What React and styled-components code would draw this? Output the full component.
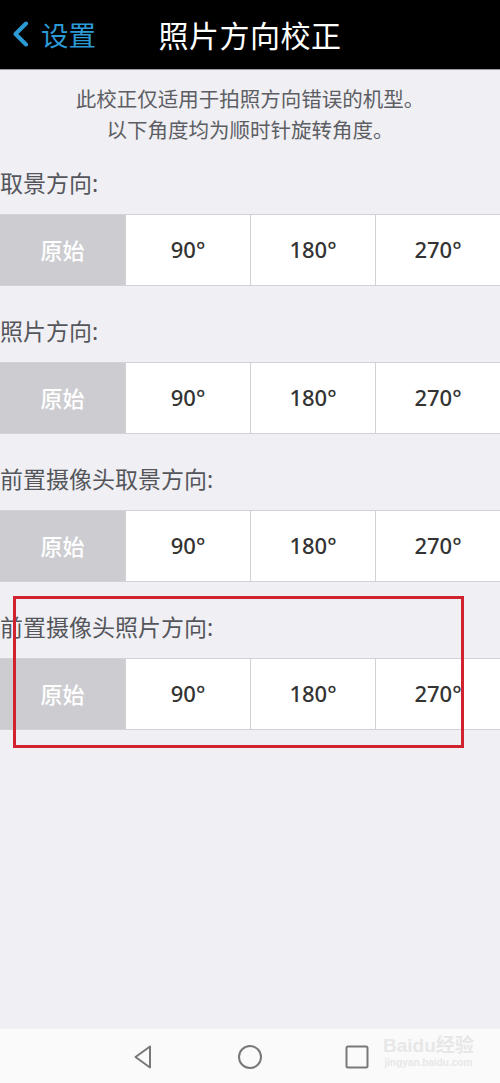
import React from "react";
import styled, { createGlobalStyle } from "styled-components";

const GlobalStyle = createGlobalStyle`
  html, body {
    margin: 0;
    padding: 0;
    background: #efeff4;
  }
  * { box-sizing: border-box; }
`;

const Page = styled.div`
  width: 500px;
  height: 1083px;
  display: flex;
  flex-direction: column;
  background: #efeff4;
  font-family: "Noto Sans", "Noto Sans CJK SC", sans-serif;
  overflow: hidden;
`;

const Header = styled.div`
  height: 70px;
  flex-shrink: 0;
  background: #000;
  border-bottom: 1px solid #9a9a9e;
  position: relative;
  display: flex;
  align-items: center;
  justify-content: center;
`;

const BackButton = styled.div`
  position: absolute;
  left: 11px;
  top: 0;
  bottom: 0;
  display: flex;
  align-items: center;
  gap: 12px;
  color: #2b9ad6;
  font-size: 27.5px;
  padding-bottom: 2px;
`;

const Title = styled.div`
  color: #fff;
  font-size: 30px;
  letter-spacing: 0.5px;
  padding-bottom: 2px;
`;

const Body = styled.div`
  flex: 1;
  position: relative;
`;

const Notes = styled.div`
  padding-top: 14px;
  text-align: center;
  font-size: 20.5px;
  line-height: 31px;
  color: #5d5e63;
`;

const Section = styled.div`
  padding-top: ${(p) => (p.$first ? 23 : 31)}px;
`;

const Label = styled.div`
  font-size: 23px;
  line-height: 28px;
  color: #55565b;
  padding-bottom: 17px;
`;

const Segments = styled.div`
  display: grid;
  grid-template-columns: repeat(4, 1fr);
  height: 72px;
  border-top: 1px solid #d2d2d6;
  border-bottom: 1px solid #d2d2d6;
  background: #fff;
`;

const Cell = styled.div`
  display: flex;
  align-items: center;
  justify-content: center;
  font-size: 22px;
  font-weight: 500;
  color: ${(p) => (p.$active ? "#fff" : "#333")};
  background: ${(p) => (p.$active ? "#cdcdd1" : "#fff")};
  border-left: ${(p) => (p.$first ? "none" : "1px solid #d2d2d6")};
  padding-bottom: 2px;
`;

const Highlight = styled.div`
  position: absolute;
  left: 13px;
  top: 526px;
  width: 451px;
  height: 152px;
  border: 3px solid #d0232f;
  pointer-events: none;
`;

const NavBar = styled.div`
  height: 54px;
  flex-shrink: 0;
  background: #fafafa;
  display: flex;
  align-items: center;
  justify-content: center;
  gap: 79px;
  position: relative;
  padding-top: 1px;
`;

const NavIcon = styled.svg`
  width: 28px;
  height: 28px;
  display: block;
`;

const Watermark = styled.div`
  position: absolute;
  left: 383px;
  top: 7px;
  color: rgba(225, 225, 225, 0.75);
  font-family: "Liberation Sans", "Noto Sans CJK SC", sans-serif;
  font-weight: bold;
  line-height: 1;
  text-align: center;
`;

const WmTop = styled.div`
  font-size: 19px;
`;

const WmBottom = styled.div`
  font-size: 10px;
  margin-top: 3px;
`;

const sections = ["取景方向:", "照片方向:", "前置摄像头取景方向:", "前置摄像头照片方向:"];
const options = ["原始", "90°", "180°", "270°"];

export default function App() {
  return (
    <Page>
      <GlobalStyle />
      <Header>
        <BackButton>
          <svg width="18" height="26" viewBox="0 0 18 26">
            <path d="M15 2.5 L4.5 13 L15 23.5" fill="none" stroke="#2b9ad6" strokeWidth="4" strokeLinecap="round" strokeLinejoin="round" />
          </svg>
          <span>设置</span>
        </BackButton>
        <Title>照片方向校正</Title>
      </Header>
      <Body>
        <Notes>
          此校正仅适用于拍照方向错误的机型。
          <br />
          以下角度均为顺时针旋转角度。
        </Notes>
        {sections.map((label, i) => (
          <Section key={label} $first={i === 0}>
            <Label>{label}</Label>
            <Segments>
              {options.map((o, j) => (
                <Cell key={o} $active={j === 0} $first={j === 0}>
                  {o}
                </Cell>
              ))}
            </Segments>
          </Section>
        ))}
        <Highlight />
      </Body>
      <NavBar>
        <NavIcon viewBox="0 0 28 28">
          <path d="M21 3.5 L6.5 14 L21 24.5 Z" fill="none" stroke="#787878" strokeWidth="2" strokeLinejoin="round" />
        </NavIcon>
        <NavIcon viewBox="0 0 28 28">
          <circle cx="14" cy="14" r="11" fill="none" stroke="#787878" strokeWidth="2" />
        </NavIcon>
        <NavIcon viewBox="0 0 28 28">
          <rect x="3.5" y="3.5" width="21" height="21" rx="1.5" fill="none" stroke="#787878" strokeWidth="2" />
        </NavIcon>
        <Watermark>
          <WmTop>Baidu经验</WmTop>
          <WmBottom>jingyan.baidu.com</WmBottom>
        </Watermark>
      </NavBar>
    </Page>
  );
}
